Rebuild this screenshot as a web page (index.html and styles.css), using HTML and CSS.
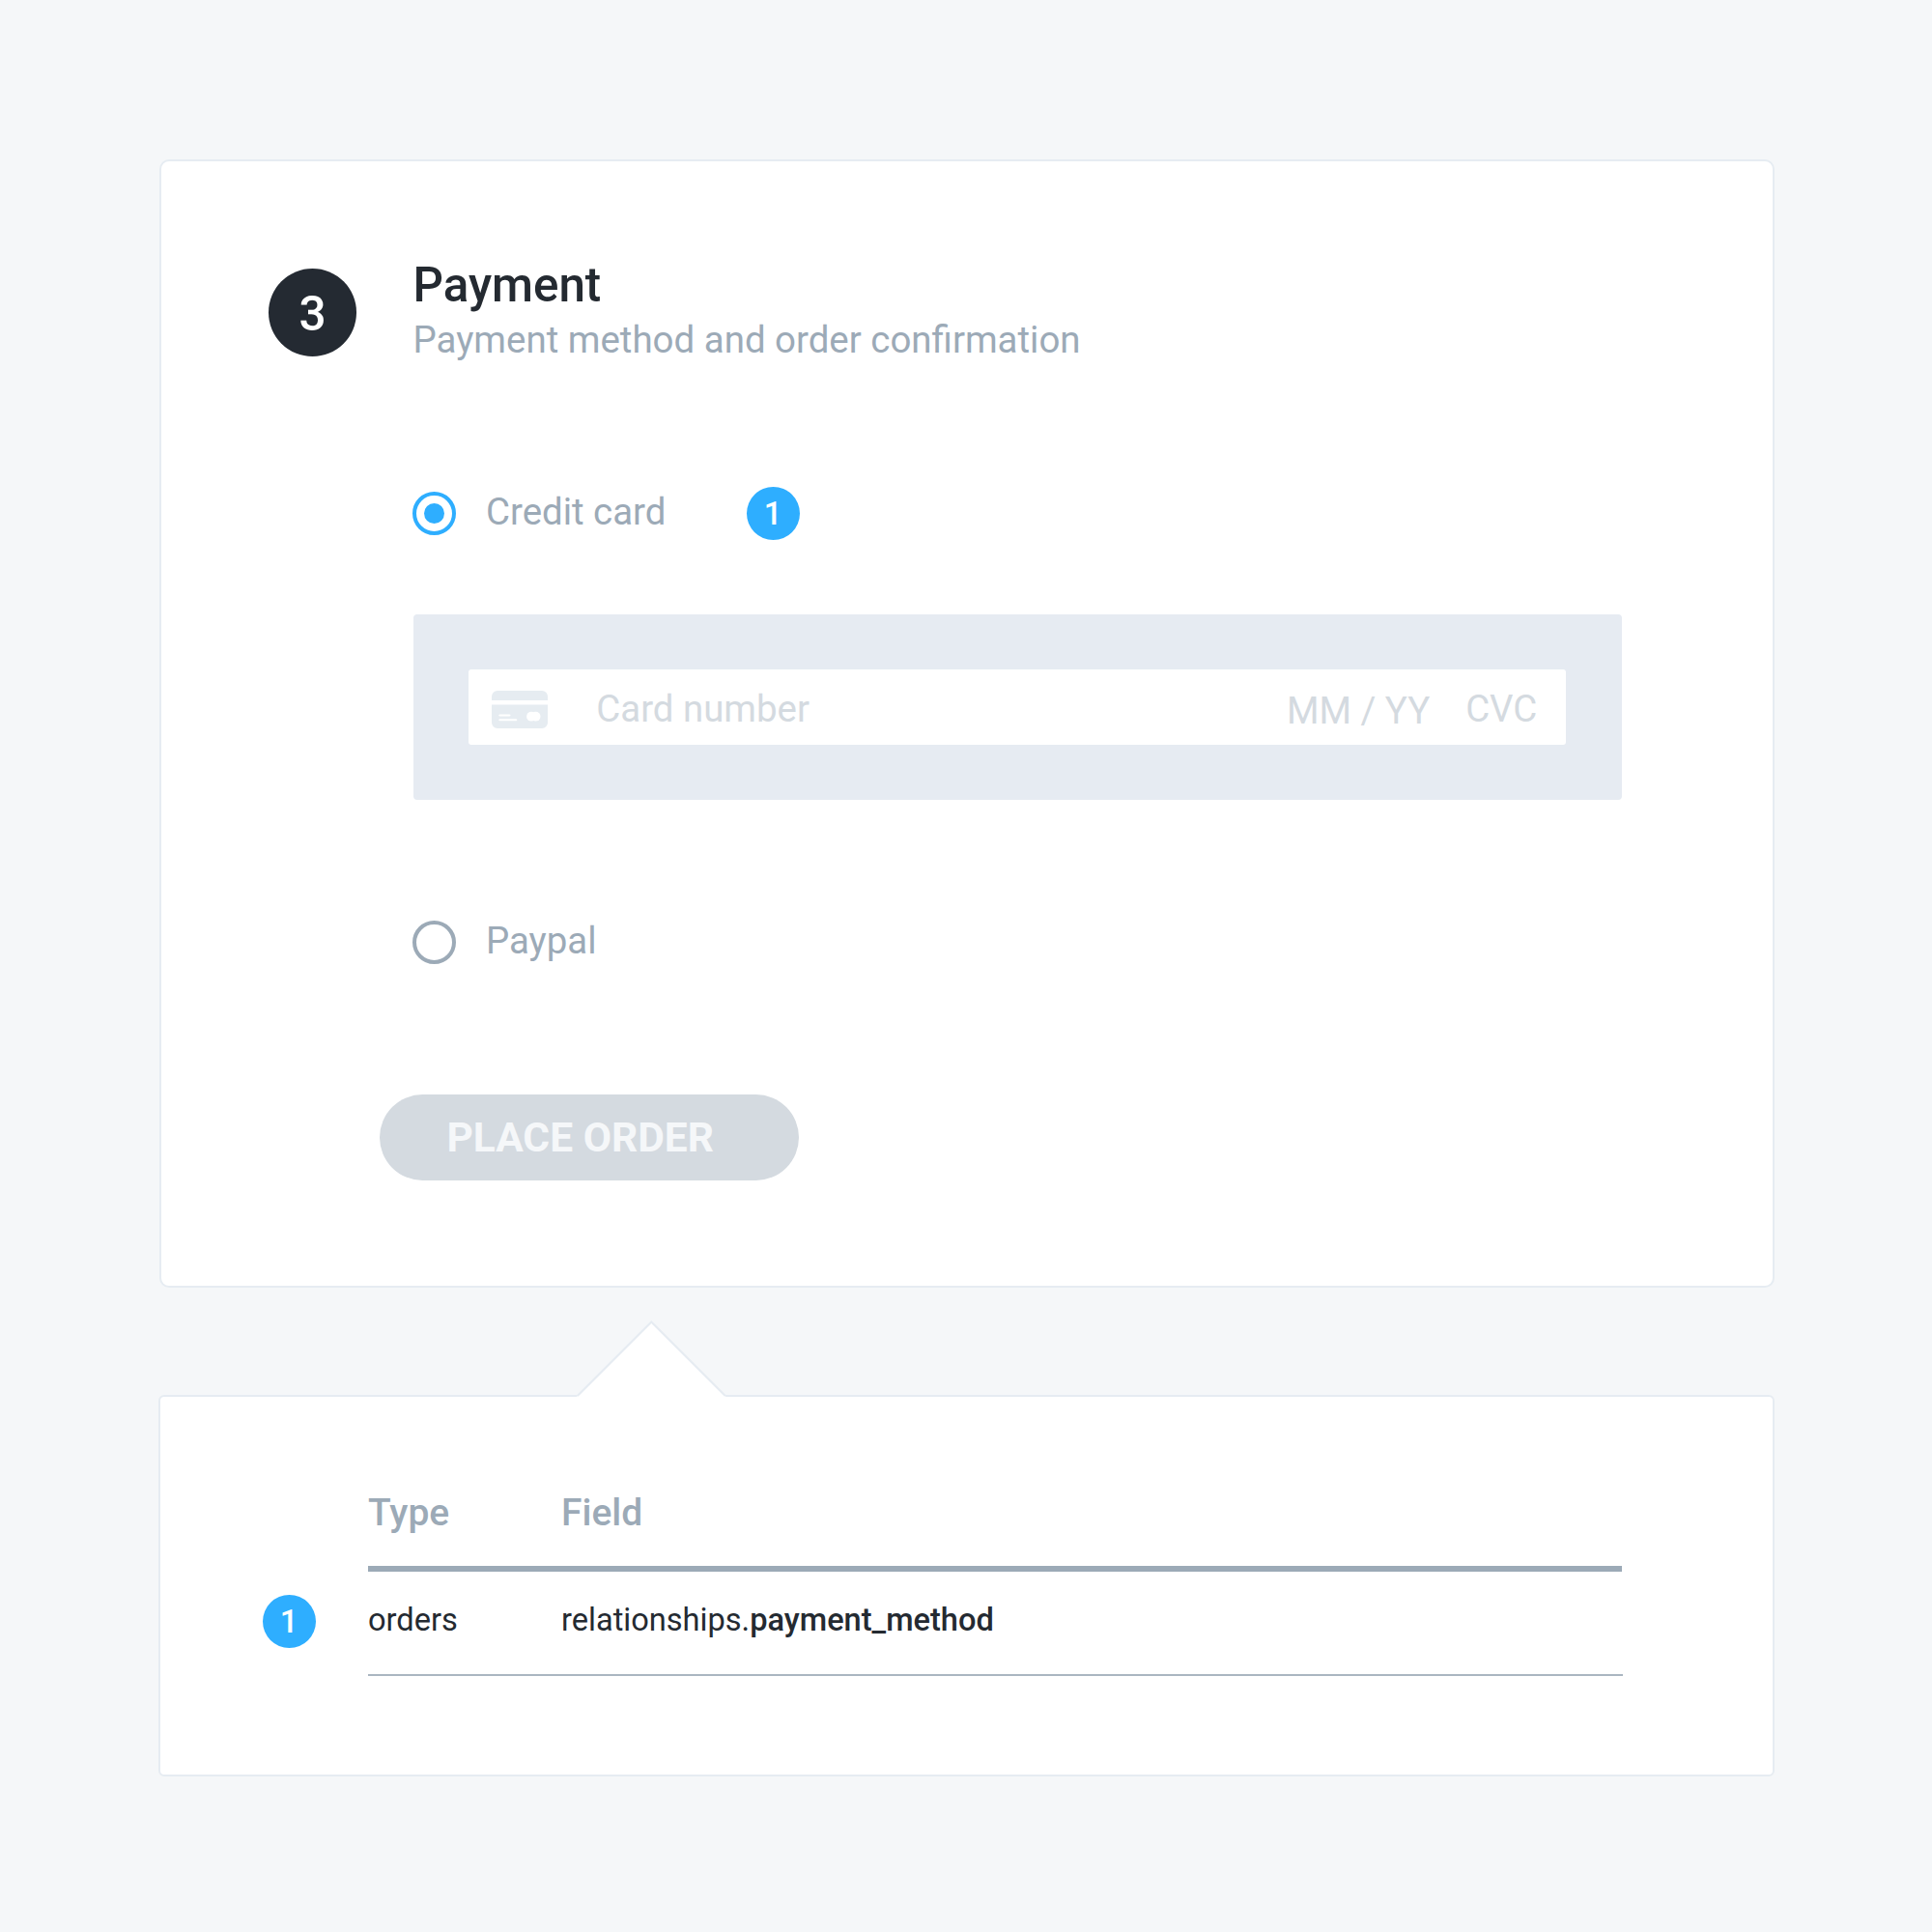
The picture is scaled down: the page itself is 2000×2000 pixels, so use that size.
FILE: index.html
```
<!DOCTYPE html>
<html lang="en">
<head>
<meta charset="utf-8">
<title>Payment</title>
<link rel="stylesheet" href="styles.css">
</head>
<body>
<main class="page">
  <section class="card payment">
    <header class="step">
      <span class="step-number">3</span>
      <div>
        <h1 class="step-title">Payment</h1>
        <p class="step-subtitle">Payment method and order confirmation</p>
      </div>
    </header>
    <div class="methods">
      <div class="option">
        <span class="radio radio-checked"></span>
        <span class="option-label">Credit card</span>
        <span class="badge">1</span>
      </div>
      <div class="panel">
        <div class="card-input">
          <svg class="card-icon" viewBox="0 0 58 39" aria-hidden="true">
            <path fill="#e6ecf1" d="M0 10V6a6 6 0 0 1 6-6h46a6 6 0 0 1 6 6v4zM0 14.5h58V33a6 6 0 0 1-6 6H6a6 6 0 0 1-6-6z"/>
            <path stroke="#fff" stroke-width="2" stroke-linecap="round" d="M8.3 25.4h10.2M8.3 30.3h17"/>
            <circle fill="#fff" cx="41" cy="26.7" r="4.9"/>
            <circle fill="#fff" cx="45.6" cy="26.7" r="4.9"/>
          </svg>
          <span class="field-number">Card number</span>
          <span class="field-date">MM / YY</span>
          <span class="field-cvc">CVC</span>
        </div>
      </div>
      <div class="option option-paypal">
        <span class="radio"></span>
        <span class="option-label">Paypal</span>
      </div>
      <button class="order" type="button" disabled>PLACE ORDER</button>
    </div>
  </section>
  <section class="card details">
    <svg class="arrow" viewBox="0 0 157 81" aria-hidden="true">
      <path fill="#fff" d="M1.5 81V78.4L78.3 1.6L155.1 78.4V81z"/>
      <path fill="none" stroke="#e6ecf2" stroke-width="2" d="M1.8 78L78.3 1.5L154.8 78"/>
    </svg>
    <div class="table">
      <div class="row row-head">
        <span class="cell col-type">Type</span>
        <span class="cell">Field</span>
      </div>
      <div class="row row-body">
        <span class="badge row-badge">1</span>
        <span class="cell col-type">orders</span>
        <span class="cell">relationships.<b class="key">payment_method</b></span>
      </div>
    </div>
  </section>
</main>
</body>
</html>
```

FILE: styles.css
```
* { box-sizing: border-box; }
body {
  margin: 0;
  background: #f5f7f9;
  font-family: Roboto, "Liberation Sans", sans-serif;
  color: #242a31;
}
.page {
  width: 2000px;
  height: 2000px;
  padding: 165px 163px 0 165px;
  display: flex;
  flex-direction: column;
  gap: 111px;
}
.card {
  background: #fff;
  border: 2px solid #e6ecf2;
}
.payment {
  height: 1168px;
  padding: 98px 156px 0 111px;
  border-radius: 10px;
}
.step {
  display: flex;
  align-items: flex-start;
  gap: 58.5px;
  height: 114px;
}
.step-number {
  width: 91px;
  height: 91px;
  margin-top: 13px;
  padding-top: 3px;
  border-radius: 50%;
  background: #242a32;
  color: #fff;
  font-size: 49.5px;
  font-weight: 500;
  line-height: 89px;
  text-align: center;
}
.step-title {
  margin: 0;
  font-size: 49.3px;
  font-weight: 500;
  line-height: 60px;
}
.step-subtitle {
  margin: 0;
  font-size: 38.45px;
  line-height: 54px;
  color: #9caab7;
}
.methods {
  display: flex;
  flex-direction: column;
  margin-left: 149px;
  padding-top: 124.6px;
}
.option {
  display: flex;
  align-items: center;
  height: 55px;
}
.radio {
  width: 45px;
  height: 45px;
  border: 4.4px solid #9caab7;
  border-radius: 50%;
  display: grid;
  place-items: center;
}
.radio-checked { border-color: #2eaeff; }
.radio-checked::after {
  content: "";
  width: 21px;
  height: 21px;
  border-radius: 50%;
  background: #2eaeff;
}
.option-label {
  margin-left: 31px;
  padding-bottom: 3.6px;
  font-size: 38.4px;
  color: #9caab7;
}
.badge {
  width: 55px;
  height: 55px;
  border-radius: 50%;
  background: #2eaeff;
  color: #fff;
  font-size: 33px;
  font-weight: 500;
  line-height: 55px;
  text-align: center;
}
.option .badge { margin-left: 83.3px; }
.panel {
  width: 1250.5px;
  height: 192.5px;
  margin: 77.4px 0 0 1px;
  padding: 57.5px 57.5px 57.5px 57px;
  border-radius: 4px;
  background: #e6ebf2;
}
.card-input {
  display: flex;
  align-items: center;
  height: 77.5px;
  padding: 0 29.7px 0 23.5px;
  border-radius: 3px;
  background: #fff;
  font-size: 38.4px;
  color: #d4dae0;
}
.card-icon {
  width: 58px;
  height: 39px;
  margin-top: 5px;
}
.field-number {
  flex: 1;
  margin-left: 50.8px;
  padding-top: 2px;
}
.field-date {
  margin-right: 36.8px;
  padding-top: 6px;
}
.field-cvc { padding-top: 2px; }
.option-paypal { margin-top: 119.7px; }
.order {
  width: 434px;
  height: 89px;
  margin: 130px 0 0 -34px;
  padding: 0 0 0 69.4px;
  border: 0;
  border-radius: 45px;
  background: #d4dae0;
  color: #f5f7f9;
  font: 700 42.5px/89px Roboto, "Liberation Sans", sans-serif;
  text-align: left;
}
.details {
  position: relative;
  height: 395px;
  margin-left: -1px;
  padding: 94px 155px 0 215px;
  border-radius: 6px;
}
.arrow {
  position: absolute;
  left: 430px;
  top: -79px;
  width: 157px;
  height: 81px;
}
.row {
  display: flex;
  position: relative;
}
.col-type { width: 200px; }
.row-head {
  width: 1297.5px;
  height: 87px;
  border-bottom: 6px solid #9caab7;
  font-size: 39px;
  font-weight: 500;
  line-height: 52px;
  color: #9caab7;
}
.row-body {
  height: 108px;
  border-bottom: 2px solid #aab6c1;
  font-size: 32.6px;
  line-height: 100px;
}
.row-badge {
  position: absolute;
  left: -109.4px;
  top: 23.6px;
}
.key { font-weight: 500; }
```
